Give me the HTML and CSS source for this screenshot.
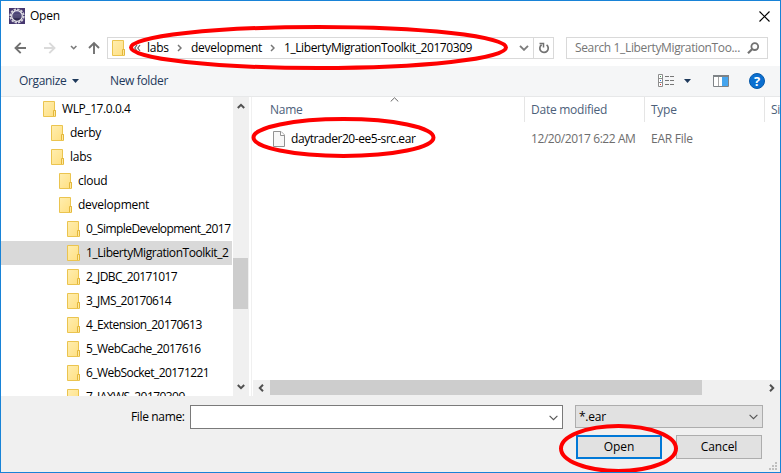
FILE: index.html
```html
<!DOCTYPE html>
<html lang="en">
<head>
<meta charset="utf-8">
<title>Open</title>
<link rel="stylesheet" href="styles.css">
</head>
<body>
<svg class="defs" width="0" height="0" aria-hidden="true">
  <defs>
    <linearGradient id="gold" x1="0" y1="0" x2="1" y2="1"><stop offset="0" stop-color="#ffeeb0"/><stop offset="1" stop-color="#ffdf80"/></linearGradient>
    <linearGradient id="steel" x1="0" y1="0" x2="0" y2="1"><stop offset="0" stop-color="#5a5288"/><stop offset="1" stop-color="#252044"/></linearGradient>
    <symbol id="folder" viewBox="0 0 13 16">
      <path d="M.5.5h11v9h1v6H.5z" fill="url(#gold)" stroke="#ebc44f"/>
      <path d="M10.500 15V9.500h2V15" fill="#ffe9a0" stroke="#e3b73b"/>
    </symbol>
  </defs>
</svg>
<div class="dialog">
  <header class="titlebar">
    <svg class="app" width="16" height="16" viewBox="0 0 16 16"><path fill="#46376f" d="M0 0h16v16H0z"/><circle cx="8" cy="8" r="6.700" fill="none" stroke="#d5d3dc" stroke-width="1.800" stroke-dasharray="2.400 1.100"/><circle cx="8" cy="8" r="5.300" fill="url(#steel)" stroke="#e8e6ec" stroke-width="1.300"/><path d="M3.500 7h9M3.500 9h9" stroke="#77719b" stroke-width=".7"/></svg>
    <span class="title">Open</span>
    <svg class="close" width="11" height="11" viewBox="0 0 11 11"><path d="M.5.5l10 10M10.500.5l-10 10" stroke="#000" stroke-width="1.150"/></svg>
  </header>

  <nav class="address">
    <svg class="navs" width="90" height="16" viewBox="0 0 90 16" fill="none">
      <path d="M2.500 8H13M7.700 2.800L2.500 8l5.200 5.200" stroke="#717171" stroke-width="1.900"/>
      <path d="M31 8h10.500M36.300 2.800L41.500 8l-5.200 5.200" stroke="#dadada" stroke-width="1.900"/>
      <path d="M58 6l2.700 2.700L63.400 6" stroke="#7a7a7a" stroke-width="1.600"/>
      <path d="M81 14V3M76 8l5-5 5 5" stroke="#717171" stroke-width="1.900"/>
    </svg>
    <div class="path">
      <svg class="folder" width="13" height="16"><use href="#folder"/></svg>
      <svg class="back" width="7" height="8" viewBox="0 0 7 8"><path d="M3 1L.8 4 3 7M6 1L3.800 4 6 7" fill="none" stroke="#666" stroke-width="1.200"/></svg>
      <span class="crumb c1">labs</span>
      <svg class="sep" width="5" height="8" viewBox="0 0 5 8"><path d="M1 1l3 3-3 3" fill="none" stroke="#777" stroke-width="1.500"/></svg>
      <span class="crumb c2">development</span>
      <svg class="sep" width="5" height="8" viewBox="0 0 5 8"><path d="M1 1l3 3-3 3" fill="none" stroke="#777" stroke-width="1.500"/></svg>
      <span class="crumb c3">1_LibertyMigrationToolkit_20170309</span>
      <svg class="drop" width="10" height="6" viewBox="0 0 10 6"><path d="M1 .8l4 4 4-4" fill="none" stroke="#7c7c7c" stroke-width="1.900"/></svg>
      <span class="refresh"><svg width="12" height="12" viewBox="0 0 12 12"><path d="M8.600 2.900A4.200 4.200 0 1 1 3.600 2.800" fill="none" stroke="#727272" stroke-width="1.700"/><path d="M1.500 1.500h4V5.500" fill="none" stroke="#727272" stroke-width="1.500"/></svg></span>
    </div>
    <div class="search"><span class="hint">Search 1_LibertyMigrationToo...</span>
      <svg width="13" height="13" viewBox="0 0 13 13"><circle cx="7.800" cy="4.600" r="3.400" fill="none" stroke="#727272" stroke-width="1.800"/><path d="M5.300 7L1 11.300" stroke="#727272" stroke-width="2.200"/></svg>
    </div>
  </nav>

  <div class="toolbar">
    <span class="organize">Organize</span>
    <svg class="tri" width="7" height="4" viewBox="0 0 7 4"><path d="M0 0h7L3.500 4z" fill="#1e395b"/></svg>
    <span class="newfolder">New folder</span>
    <svg class="view" width="17" height="14" viewBox="0 0 17 14"><path d="M.5.5h4v12h-4zM.5 4.500h4M.5 8.500h4" fill="#fff" stroke="#8d8d8d"/><path d="M2 2h1v1H2z" fill="#3b9b55"/><path d="M2 6h1v1H2z" fill="#2577e8"/><path d="M2 10h1v1H2z" fill="#d33"/><path d="M7 2.500h4M12 2.500h4M7 6.500h4M12 6.500h4M7 10.500h4M12 10.500h4" stroke="#777"/></svg>
    <svg class="tri2" width="7" height="4" viewBox="0 0 7 4"><path d="M0 0h7L3.500 4z" fill="#1e395b"/></svg>
    <svg class="preview" width="16" height="12" viewBox="0 0 16 12"><path d="M.5.5h15v11H.5z" fill="#fff" stroke="#7e8387"/><path d="M0 0h16v2H0z" fill="#7e8387"/><path d="M5.500 2v9" stroke="#a4a4a4"/><path d="M9 2h6v9H9z" fill="#46a5ee"/></svg>
    <span class="help">?</span>
  </div>

  <main class="content">
    <aside class="tree">
      <ul class="folders">
        <li class="l0"><svg width="13" height="16"><use href="#folder"/></svg><span>WLP_17.0.0.4</span></li>
        <li class="l1"><svg width="13" height="16"><use href="#folder"/></svg><span>derby</span></li>
        <li class="l1"><svg width="13" height="16"><use href="#folder"/></svg><span>labs</span></li>
        <li class="l2"><svg width="13" height="16"><use href="#folder"/></svg><span>cloud</span></li>
        <li class="l2"><svg width="13" height="16"><use href="#folder"/></svg><span>development</span></li>
        <li class="l3"><svg width="13" height="16"><use href="#folder"/></svg><span>0_SimpleDevelopment_2017</span></li>
        <li class="l3 selected"><svg width="13" height="16"><use href="#folder"/></svg><span>1_LibertyMigrationToolkit_2</span></li>
        <li class="l3"><svg width="13" height="16"><use href="#folder"/></svg><span>2_JDBC_20171017</span></li>
        <li class="l3"><svg width="13" height="16"><use href="#folder"/></svg><span>3_JMS_20170614</span></li>
        <li class="l3"><svg width="13" height="16"><use href="#folder"/></svg><span>4_Extension_20170613</span></li>
        <li class="l3"><svg width="13" height="16"><use href="#folder"/></svg><span>5_WebCache_2017616</span></li>
        <li class="l3"><svg width="13" height="16"><use href="#folder"/></svg><span>6_WebSocket_20171221</span></li>
        <li class="l3"><svg width="13" height="16"><use href="#folder"/></svg><span>7_JAXWS_20170309</span></li>
      </ul>
      <div class="vscroll">
        <svg width="8" height="6" viewBox="0 0 8 6"><path d="M.8 5L4 1.800 7.200 5" fill="none" stroke="#505050" stroke-width="2"/></svg>
        <div class="vthumb"></div>
        <svg width="8" height="6" viewBox="0 0 8 6"><path d="M.8 1L4 4.200 7.200 1" fill="none" stroke="#505050" stroke-width="2"/></svg>
      </div>
    </aside>
    <section class="files">
      <div class="heads">
        <span class="h name">Name</span><span class="h date">Date modified</span><span class="h type">Type</span><span class="h size">Size</span>
        <svg class="sort" width="9" height="5" viewBox="0 0 9 5"><path d="M.7 4.500l3.800-3.700 3.800 3.700" fill="none" stroke="#666"/></svg>
      </div>
      <div class="file">
        <span class="fname"><svg width="12" height="16" viewBox="0 0 12 16"><path d="M.5.500h7.500l3.500 3.500v11.500H.5z" fill="#f7f7f7" stroke="#929292"/><path d="M7.500.5V4.500h4" fill="#fff" stroke="#929292"/></svg><span class="t">daytrader20-ee5-src.ear</span></span>
        <span class="fdate">12/20/2017 6:22 AM</span><span class="ftype">EAR File</span>
      </div>
      <div class="hscroll">
        <svg width="6" height="8" viewBox="0 0 6 8"><path d="M5 .8L1.800 4 5 7.200" fill="none" stroke="#505050" stroke-width="2"/></svg>
        <div class="hthumb"></div>
        <svg class="right" width="6" height="8" viewBox="0 0 6 8"><path d="M1 .8L4.200 4 1 7.200" fill="none" stroke="#505050" stroke-width="2"/></svg>
      </div>
    </section>
  </main>

  <footer class="footer">
    <div class="fields">
      <span class="label">File name:</span>
      <div class="input"><svg width="9" height="6" viewBox="0 0 9 6"><path d="M.6.8l3.900 3.900L8.400.8" fill="none" stroke="#555" stroke-width="1.100"/></svg></div>
      <div class="select"><span>*.ear</span><svg width="9" height="6" viewBox="0 0 9 6"><path d="M.6.8l3.900 3.900L8.400.8" fill="none" stroke="#555" stroke-width="1.100"/></svg></div>
    </div>
    <div class="buttons">
      <div class="btn primary">Open</div>
      <div class="btn">Cancel</div>
    </div>
    <svg class="grip" width="8" height="8" viewBox="0 0 8 8"><path d="M6 0h2v2H6zM3 3h2v2H3zM6 3h2v2H6zM0 6h2v2H0zM3 6h2v2H3zM6 6h2v2H6z" fill="#bfbfbf"/></svg>
  </footer>
  <svg class="marks" width="781" height="473" viewBox="0 0 781 473" fill="none" stroke="#fe0000" stroke-width="4">
    <ellipse cx="318.500" cy="47.500" rx="187.500" ry="20.500"/>
    <ellipse cx="343.500" cy="137.500" rx="90" ry="18.500"/>
    <ellipse cx="618.500" cy="448.500" rx="57.500" ry="22.500"/>
  </svg>
</div>
</body>
</html>
```
FILE: styles.css
```css
* { box-sizing: border-box; }
body { margin: 0; }
.defs { position: absolute; }
svg { display: block; flex: none; }
.dialog {
  position: relative;
  display: flex;
  flex-direction: column;
  width: 781px;
  height: 473px;
  border: 1px solid #1883d7;
  background: #fff;
  color: #000;
  font: 12px/16px "Open Sans", "Noto Sans", sans-serif;
  letter-spacing: -0.25px;
  white-space: nowrap;
  overflow: hidden;
}
.marks { position: absolute; left: -1px; top: -1px; }

.titlebar { display: flex; align-items: center; height: 30px; padding: 0 10px 0 8px; flex: none; }
.title { margin-left: 5px; flex: 1; }

.address { display: flex; align-items: center; height: 35px; padding: 0 12px 1px 12px; flex: none; }
.path { display: flex; align-items: center; width: 447px; height: 22px; margin-left: 4px; border: 1px solid #d9d9d9; }
.path .folder { margin-left: 4px; }
.back { margin-left: 9px; }
.c1 { margin-left: 6px; width: 21px; }
.sep { margin-left: 9px; }
.c2 { margin-left: 9px; width: 70px; }
.c3 { margin-left: 9px; letter-spacing: -0.42px; }
.drop { margin-left: auto; }
.refresh { display: flex; align-items: center; justify-content: center; width: 20px; height: 20px; margin-left: 4px; border-left: 1px solid #d9d9d9; }
.search { display: flex; align-items: center; justify-content: space-between; width: 202px; height: 22px; margin-left: auto; padding: 0 7px 0 8px; border: 1px solid #d9d9d9; color: #767676; }
.hint { letter-spacing: -0.36px; }

.toolbar { display: flex; align-items: center; height: 31px; flex: none; padding: 0 15px 0 18px; background: #f5f6f7; border-bottom: 1px solid #e7e8e9; color: #1e395b; }
.organize { width: 47px; }
.tri { margin-left: 6px; }
.newfolder { margin-left: 31px; flex: 1; letter-spacing: -0.35px; }
.organize { letter-spacing: -0.35px; }
.tri2 { margin-left: 9px; }
.preview { margin-left: 22px; }
.help { width: 16px; height: 16px; margin-left: 20px; border-radius: 50%; border: 1px solid #0759a9; background: #0b6fd0; color: #fff; text-align: center; font-weight: 700; font-size: 13px; line-height: 14px; letter-spacing: 0; }

.content { display: flex; height: 299px; flex: none; }
.tree { display: flex; width: 251px; border-right: 1px solid #f0f0f0; }
.folders { width: 232px; margin: 0; padding: 0; overflow: hidden; list-style: none; }
.folders li { display: flex; align-items: center; height: 24px; padding-left: 42px; overflow: hidden; }
.folders span { margin-left: 6px; }
.folders .l1 { padding-left: 50px; }
.folders .l2 { padding-left: 58px; }
.folders .l3 { padding-left: 66px; letter-spacing: -0.56px; }
.folders .l0 { letter-spacing: -0.42px; }
.folders .selected { width: 231px; background: #d9d9d9; letter-spacing: -0.44px; }
.vscroll { display: flex; flex-direction: column; align-items: center; width: 16px; padding: 6px 0; background: #f0f0f0; }
.vthumb { width: 15px; height: 51px; margin: 149px 1px auto 0; background: #cdcdcd; }

.files { display: flex; flex-direction: column; width: 528px; }
.heads { position: relative; display: flex; height: 25px; color: #4c607a; }
.h { padding: 5px 0 0 6px; border-right: 1px solid #e5e5e5; line-height: 16px; }
.name { width: 273px; padding-left: 18px; }
.date, .type { width: 120px; }
.size { flex: 1; border: 0; overflow: hidden; }
.sort { position: absolute; left: 138px; top: 0; }
.file { display: flex; height: 33px; align-items: center; color: #6d6d6d; }
.fname { display: flex; align-items: center; width: 279px; padding-left: 21px; color: #000; letter-spacing: -0.44px; }
.t { margin-left: 6px; }
.fdate { width: 120px; letter-spacing: -0.42px; }
.hscroll { display: flex; align-items: center; height: 16px; margin: auto 0 0 1px; padding: 0 5px; background: #f0f0f0; }
.hthumb { width: 432px; height: 15px; margin-left: 6px; margin-bottom: 1px; background: #cdcdcd; }
.right { margin-left: auto; }

.footer { position: relative; flex: 1; padding-top: 9px; background: #f0f0f0; }
.fields { display: flex; align-items: flex-start; height: 24px; }
.label { width: 58px; margin: 4px 0 0 130px; letter-spacing: -0.35px; }
.input { display: flex; align-items: center; justify-content: flex-end; width: 373px; height: 24px; margin-left: 1px; padding: 2px 4px 0 0; border: 1px solid #7a7a7a; background: #fff; }
.select { display: flex; align-items: center; justify-content: space-between; width: 188px; height: 23px; margin-left: 12px; padding: 0 4px 0 3px; border: 1px solid #adadad; background: #e1e1e1; }
.buttons { display: flex; justify-content: flex-end; gap: 14px; margin: 6px 18px 0 0; }
.btn { width: 86px; height: 24px; border: 1px solid #adadad; background: #e1e1e1; text-align: center; line-height: 22px; letter-spacing: -0.1px; }
.primary { border: 2px solid #0078d7; line-height: 20px; }
.grip { position: absolute; right: 3px; bottom: 2px; }
```
